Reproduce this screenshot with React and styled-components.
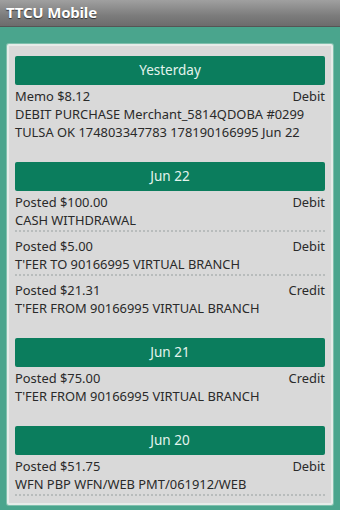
import React from 'react'
import styled, { createGlobalStyle } from 'styled-components'

const Global = createGlobalStyle`
  body {
    margin: 0;
    background: #4aa58d;
    font-family: 'Noto Sans', 'Open Sans', sans-serif;
  }
`

const groups = [
  {
    day: 'Yesterday',
    items: [
      { status: 'Memo $8.12', kind: 'Debit', desc: ['DEBIT PURCHASE Merchant_5814QDOBA #0299', 'TULSA OK 174803347783 178190166995 Jun 22'] },
    ],
  },
  {
    day: 'Jun 22',
    items: [
      { status: 'Posted $100.00', kind: 'Debit', desc: ['CASH WITHDRAWAL'] },
      { status: 'Posted $5.00', kind: 'Debit', desc: ["T'FER TO 90166995 VIRTUAL BRANCH"] },
      { status: 'Posted $21.31', kind: 'Credit', desc: ["T'FER FROM 90166995 VIRTUAL BRANCH"] },
    ],
  },
  {
    day: 'Jun 21',
    items: [
      { status: 'Posted $75.00', kind: 'Credit', desc: ["T'FER FROM 90166995 VIRTUAL BRANCH"] },
    ],
  },
  {
    day: 'Jun 20',
    items: [
      { status: 'Posted $51.75', kind: 'Debit', desc: ['WFN PBP WFN/WEB PMT/061912/WEB'] },
    ],
  },
]

const App = () => {
  return (
    <Screen>
      <Global />
      <TitleBar>TTCU Mobile</TitleBar>
      <Body>
        <Card>
          {groups.map((g, gi) => (
            <Group key={g.day} last={gi === groups.length - 1}>
              <DayHeader>{g.day}</DayHeader>
              {g.items.map((t, i) => (
                <Item key={i} divider={i < g.items.length - 1 || gi === groups.length - 1}>
                  <Row>
                    <span>{t.status}</span>
                    <span>{t.kind}</span>
                  </Row>
                  {t.desc.map(line => (
                    <Desc key={line}>{line}</Desc>
                  ))}
                </Item>
              ))}
            </Group>
          ))}
        </Card>
      </Body>
    </Screen>
  )
}

const Screen = styled.div`
  width: 340px;
  height: 510px;
  overflow: hidden;
  display: flex;
  flex-direction: column;
`

const TitleBar = styled.div`
  height: 26px;
  flex-shrink: 0;
  background: linear-gradient(#a0a0a0, #7c7c7c 60%, #6c6c6c);
  border-bottom: 1px solid #555;
  color: #fff;
  font-weight: 700;
  font-size: 15px;
  line-height: 25px;
  padding-left: 6px;
  letter-spacing: -0.2px;
  text-shadow: 0 1px 1px rgba(0,0,0,0.6);
`

const Body = styled.div`
  flex: 1;
  padding: 17px 7px 0 7px;
  display: flex;
  flex-direction: column;
`

const Card = styled.div`
  background: #d9d9d9;
  border: 2px solid #e6ece9;
  border-radius: 2px;
  padding: 10px 6px 4px 6px;
  box-shadow: 0 0 0 1px #7fc0ad;
`

const Group = styled.div`
  margin-bottom: ${p => (p.last ? '0' : '21px')};
`

const DayHeader = styled.div`
  background: #0b7d5d;
  color: #e4f4ee;
  height: 29px;
  border-radius: 2px;
  text-align: center;
  font-size: 13.5px;
  line-height: 29px;
`

const Item = styled.div`
  padding: 2px 0 ${p => (p.divider ? '1px' : '0')} 0;
  margin-bottom: ${p => (p.divider ? '3px' : '0')};
  border-bottom: ${p => (p.divider ? '2px dotted #b8bcbc' : 'none')};
  color: #2a2a2a;
  font-size: 12.9px;
  line-height: 18px;
`

const Row = styled.div`
  display: flex;
  justify-content: space-between;
`

const Desc = styled.div`
  white-space: nowrap;
`

export default App
